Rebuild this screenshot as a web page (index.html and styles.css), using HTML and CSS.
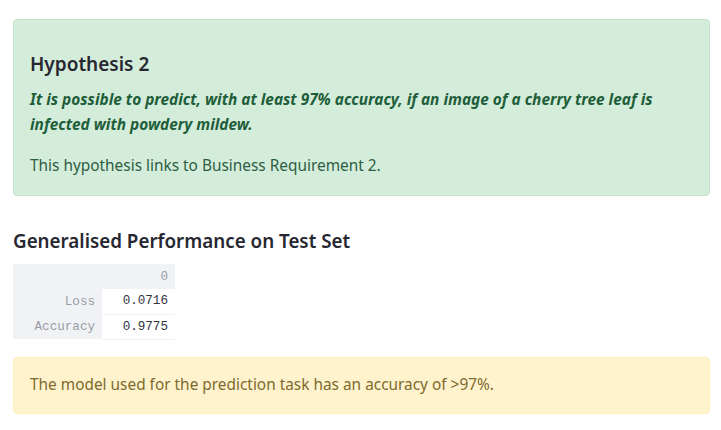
FILE: index.html
```html
<!DOCTYPE html>
<html>
<head>
<meta charset="utf-8">
<link rel="stylesheet" href="styles.css">
</head>
<body>
<div class="main">
  <div class="alert alert-success">
    <h3 class="alert-title">Hypothesis 2</h3>
    <p class="hyp">It is possible to predict, with at least 97% accuracy, if an image of a cherry tree leaf is infected with powdery mildew.</p>
    <p class="note">This hypothesis links to Business Requirement 2.</p>
  </div>
  <h3 class="section-title">Generalised Performance on Test Set</h3>
  <table class="df">
    <thead>
      <tr><th class="blank"></th><th class="col">0</th></tr>
    </thead>
    <tbody>
      <tr><th class="idx">Loss</th><td>0.0716</td></tr>
      <tr><th class="idx">Accuracy</th><td>0.9775</td></tr>
    </tbody>
  </table>
  <div class="alert alert-warning">
    <p class="note">The model used for the prediction task has an accuracy of &gt;97%.</p>
  </div>
</div>
</body>
</html>
```

FILE: styles.css
```css
html, body {
  margin: 0;
  padding: 0;
  background: #ffffff;
}
body {
  font-family: "Noto Sans", "Open Sans", sans-serif;
  color: #262730;
}
.main {
  padding: 19px 11px 0 13px;
}
.alert {
  border: 1px solid;
  border-radius: 4px;
  padding: 16px 16px;
}
.alert-success {
  background: #d4edda;
  border-color: #c3e6cb;
  color: #1d5e38;
  padding-top: 30px;
  padding-bottom: 17px;
}
.alert-warning {
  background: #fff3cd;
  border-color: #ffeeba;
  color: #7d6a2c;
  margin-top: 17px;
  padding-top: 14px;
  padding-bottom: 16px;
}
.alert-title {
  margin: 0;
  font-size: 19px;
  font-weight: 600;
  line-height: 28px;
  color: #262730;
}
.hyp {
  margin: 9px 0 0 0;
  font-size: 15.4px;
  line-height: 25px;
  font-style: italic;
  font-weight: 700;
  color: #1f5e3a;
}
.note {
  margin: 0;
  font-size: 15.4px;
  line-height: 25px;
  font-weight: 400;
}
.alert-success .note {
  margin-top: 16px;
  color: #2d5d44;
}
.section-title {
  margin: 31px 0 9px 0;
  font-size: 18.8px;
  font-weight: 600;
  line-height: 28px;
  color: #262730;
}
.df {
  border-collapse: collapse;
  font-family: "Liberation Mono", "DejaVu Sans Mono", monospace;
  font-size: 12.6px;
}
.df th, .df td {
  height: 25px;
  padding: 0 7px 0 8px;
  text-align: right;
  font-weight: 400;
  box-sizing: border-box;
}
.df thead th {
  background: #f0f2f6;
  color: #9a9ca5;
}
.df th.blank {
  width: 89px;
}
.df th.col {
  width: 73px;
}
.df th.idx {
  background: #f0f2f6;
  color: #9a9ca5;
}
.df td {
  background: #ffffff;
  color: #31333f;
  border-bottom: 1px solid #f0f2f6;
}
```
